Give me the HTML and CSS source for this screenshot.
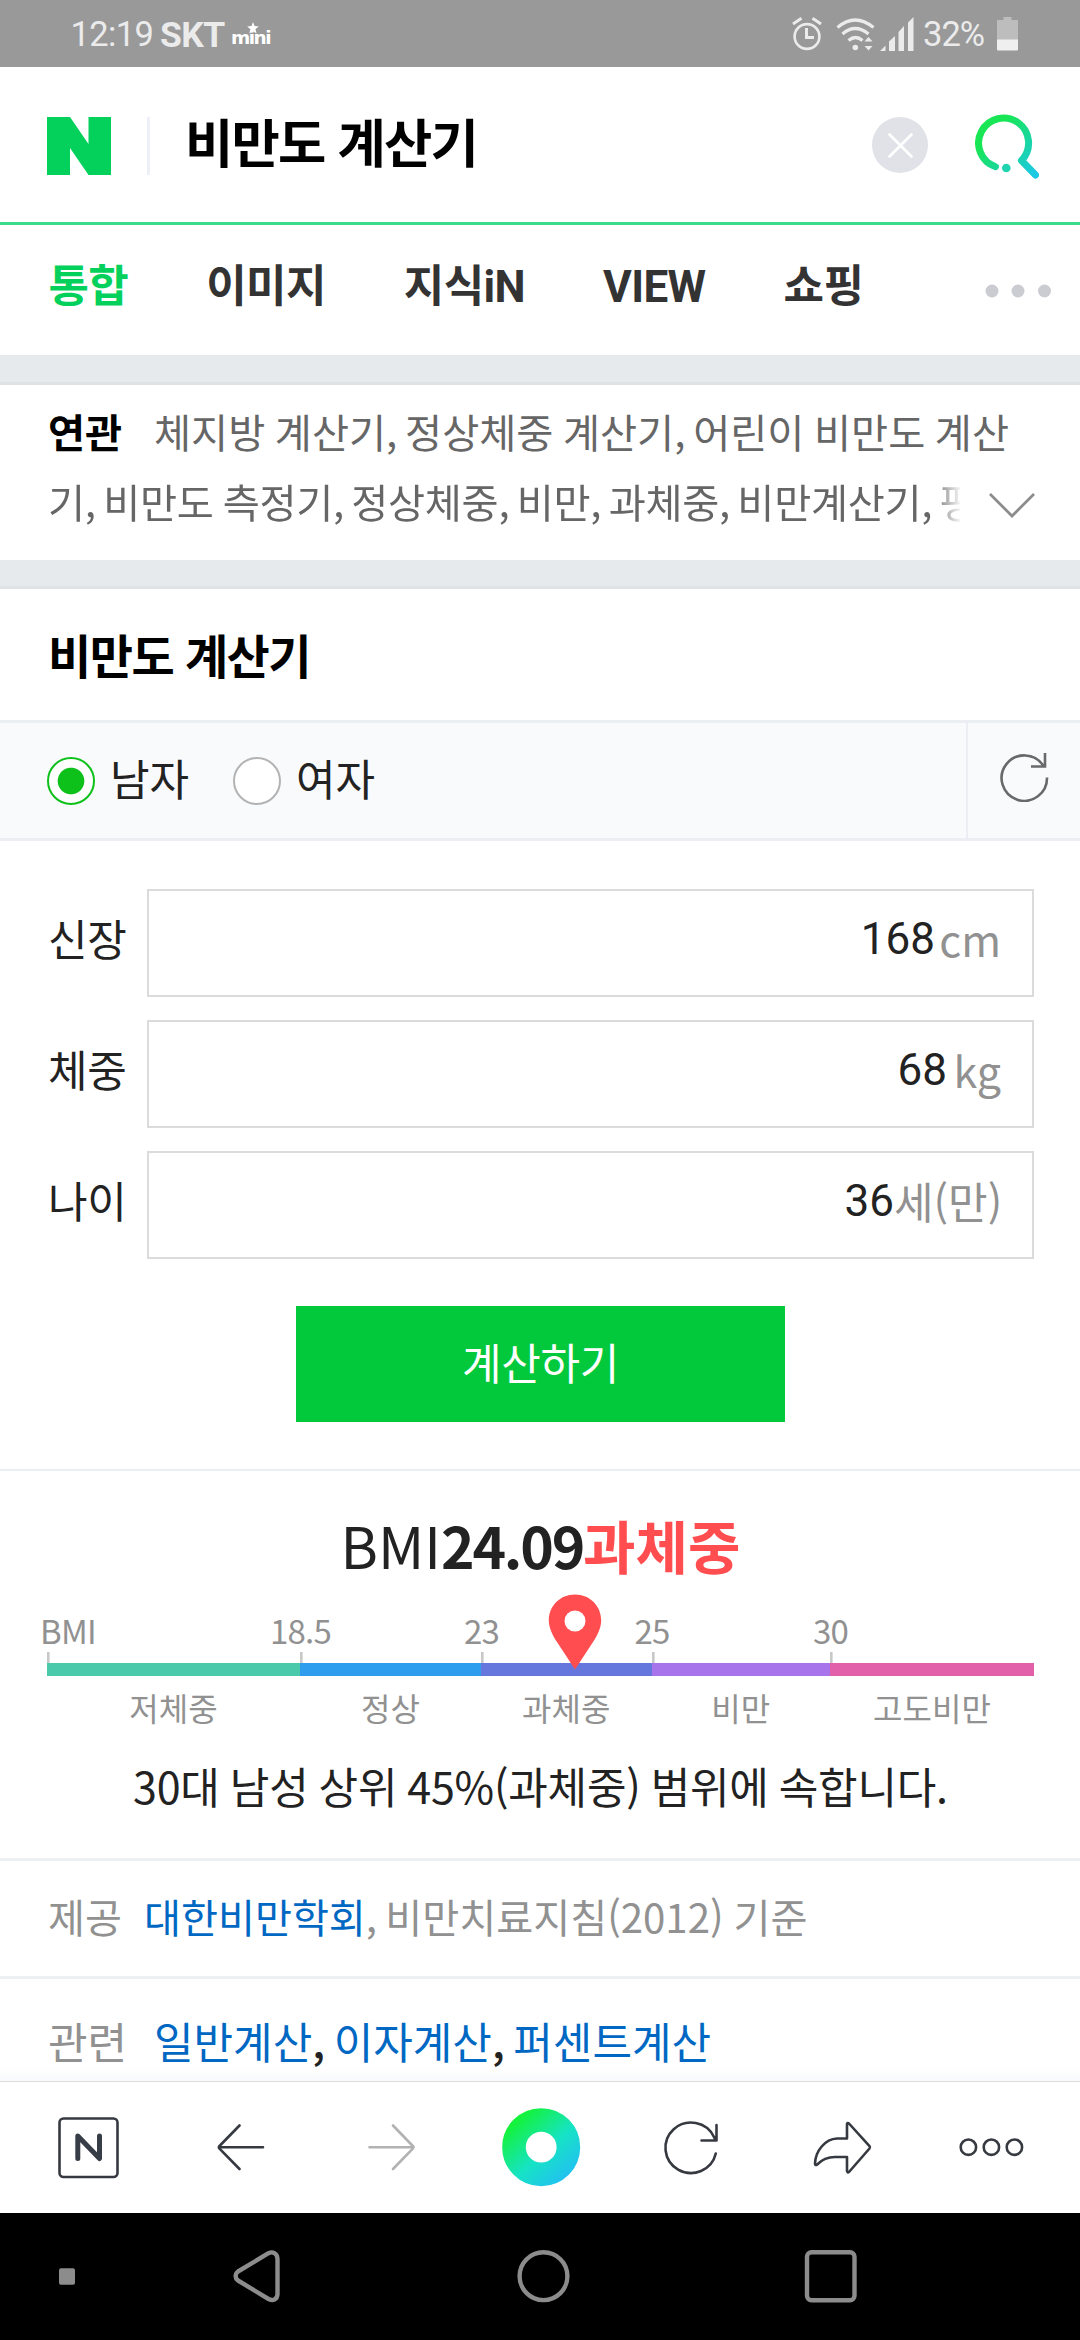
FILE: index.html
```html
<!DOCTYPE html>
<html lang="ko">
<head>
<meta charset="utf-8">
<title>비만도 계산기</title>
<link rel="stylesheet" href="styles.css">
</head>
<body>
<div class="status">
  <div class="status-left">
    <span class="clock">12:19</span>
    <b class="carrier">SKT</b>
    <span class="mini">mini<svg class="mini-star" width="12" height="12" viewBox="0 0 12 12"><path d="M6 0l1.500 4 4.300.4-3.300 2.700 1 4.400L6 9l-3.700 2.500 1.200-4.300L.2 4.400l4.400-.3z" fill="#fff"/></svg></span>
  </div>
  <div class="status-right">
    <svg class="alarm" width="30" height="34" viewBox="0 0 30 34" fill="none" stroke="#ebebeb" stroke-width="2.600"><circle cx="15" cy="19.500" r="12.400"/><path d="M14.500 11v9.500H22M1 7l8.500-5.700M29 7l-8.500-5.700" stroke-width="3"/></svg>
    <svg class="wifi" width="40" height="34" viewBox="0 0 40 34" fill="none" stroke="#ebebeb" stroke-width="3.200"><path d="M1.500 10.500q17.500-15 36 0M6.500 17q12.500-11 26 0M12.500 23.500q7-6 14 0"/><circle cx="19.300" cy="30.500" r="2.800" fill="#ebebeb" stroke="none"/><path d="M32.500 20l4 4.500h-8zM32.500 33.500l4-4.500h-8z" fill="#ebebeb" stroke="none"/></svg>
    <svg class="signal" width="34" height="34" viewBox="0 0 34 34" fill="#ebebeb"><path d="M0 34l5.500-5.500V34zM9 34V24.500l6-5.500v15zM18.500 34V15l5.500-6v25zM28 34V5.500L33.500 0v34z"/></svg>
    <span class="pct">32%</span>
    <svg class="battery" width="21" height="34" viewBox="0 0 21 34"><path d="M6.500 0h8v3H21v20H0V3h6.500z" fill="#bdbdbd"/><path d="M0 22.500h21V32.500q0 1-1 1H1q-1 0-1-1z" fill="#efefef"/></svg>
  </div>
</div>

<header class="search">
  <svg class="logo" width="64" height="58" viewBox="0 0 64 58"><path d="M0 0h23l18.500 27V0H64v58H41.500L23 31v27H0z" fill="#03d15c"/></svg>
  <i class="search-line"></i>
  <div class="query">비만도 계산기</div>
  <svg class="clear" width="56" height="56" viewBox="0 0 56 56"><circle cx="28" cy="28" r="28" fill="#e1e2e7"/><path d="M17.500 17.500l22 22M39.500 17.500l-22 22" stroke="#fff" stroke-width="2.600" stroke-linecap="round"/></svg>
  <svg class="glass" width="64" height="66" viewBox="0 0 64 66" fill="none" stroke="url(#gs)" stroke-width="7"><defs><linearGradient id="gs" gradientUnits="userSpaceOnUse" x1="12" y1="14" x2="62" y2="62"><stop offset="0.100" stop-color="#18e654"/><stop offset="0.950" stop-color="#1bc8e4"/></linearGradient></defs><path d="M20.500 52.700A25 25 0 1 1 46.500 46.500L60.500 61" stroke-linecap="round" stroke-linejoin="round"/><circle cx="31.300" cy="54" r="4.300" fill="#20d4b2" stroke="none"/></svg>
</header>

<nav class="tabs">
  <span class="tab on">통합</span><span class="tab">이미지</span><span class="tab">지식iN</span><span class="tab">VIEW</span><span class="tab">쇼핑</span>
  <svg class="more" width="66" height="14" viewBox="0 0 66 14" fill="#cbccd1"><circle cx="7" cy="7" r="6.500"/><circle cx="33" cy="7" r="6.500"/><circle cx="59.500" cy="7" r="6.500"/></svg>
</nav>

<section class="related">
  <div class="rel-row"><b class="rel-title">연관</b><span>체지방 계산기<s>,</s> 정상체중 계산기<s>,</s> 어린이 비만도 계산</span></div>
  <div class="rel-row rel-second"><span class="rel-fade">기<s>,</s> 비만도 측정기<s>,</s> 정상체중<s>,</s> 비만<s>,</s> 과체중<s>,</s> 비만계산기<s>,</s> 평</span>
    <svg class="chev" width="46" height="26" viewBox="0 0 46 26" fill="none" stroke="#8c8c8c" stroke-width="2.800"><path d="M1 1l22 22L45 1"/></svg></div>
</section>

<main class="calc">
  <h2 class="calc-title">비만도 계산기</h2>
  <div class="sex">
    <i class="radio checked"></i><span class="sex-label">남자</span>
    <i class="radio"></i><span class="sex-label">여자</span>
    <div class="reset"><svg width="50" height="50" viewBox="0 0 50 50" fill="none" stroke="#696969" stroke-width="2.600"><path d="M47 25.500A22.700 22.700 0 1 1 43.500 14"/><path d="M45 1v13.500H31"/></svg></div>
  </div>
  <div class="form">
    <div class="field"><span class="field-name">신장</span><div class="box"><span class="num">168</span><span class="unit u1">cm</span></div></div>
    <div class="field"><span class="field-name">체중</span><div class="box"><span class="num">68</span><span class="unit u2">kg</span></div></div>
    <div class="field"><span class="field-name">나이</span><div class="box"><span class="num">36</span><span class="unit u3">세(만)</span></div></div>
    <div class="submit">계산하기</div>
  </div>
  <div class="result">
    <div class="bmi">BMI<b class="bmi-value">24.09</b><b class="bmi-state">과체중</b></div>
    <div class="scale">
      <span class="mark first" style="left:0">BMI</span>
      <span class="mark" style="left:253px">18.5</span>
      <span class="mark" style="left:434px">23</span>
      <span class="mark" style="left:604.500px">25</span>
      <span class="mark" style="left:783px">30</span>
      <div class="bars"><i class="s1"></i><i class="s2"></i><i class="s3"></i><i class="s4"></i><i class="s5"></i></div>
      <div class="names"><span>저체중</span><span>정상</span><span>과체중</span><span>비만</span><span>고도비만</span></div>
      <svg class="pin" width="54" height="76" viewBox="0 0 54 76"><path d="M27 .5C12 .5.8 12 .8 26.500.8 34 5 42 9 48L27 75.500 45 48c4-6 8.200-14 8.200-21.500C53.200 12 42 .5 27 .5z" fill="#ff4d50"/><circle cx="27" cy="27" r="10.500" fill="#fff"/></svg>
    </div>
    <p class="summary">30대 남성 상위 45%(과체중) 범위에 속합니다.</p>
  </div>
  <div class="source"><span class="src-name">제공</span><span><a>대한비만학회</a><s>,</s> 비만치료지침(2012) 기준</span></div>
  <div class="links"><span class="links-name">관련</span><span><a>일반계산</a><s>,</s> <a>이자계산</a><s>,</s> <a>퍼센트계산</a></span></div>
</main>

<footer class="toolbar">
  <svg width="1080" height="131" viewBox="0 0 1080 131" fill="none" stroke="#363a40" stroke-width="2.600" stroke-linecap="round" stroke-linejoin="round">
    <defs><linearGradient id="gd" gradientUnits="userSpaceOnUse" x1="512" y1="38" x2="564" y2="96"><stop offset="0.050" stop-color="#14f23c"/><stop offset="0.580" stop-color="#16e3c4"/><stop offset="1" stop-color="#21c3ee"/></linearGradient></defs>
    <rect x="59.500" y="36.500" width="58" height="58.500" rx="4"/>
    <path d="M77.800 76.500V54L99.500 76.500V54" stroke="#363d46" stroke-width="5"/>
    <path d="M263 65.300H220M239.500 43.500L219.500 64q-1.300 1.300 0 2.600L239.500 87"/>
    <path d="M369.500 65.300H412M393 43.500L412.800 64q1.300 1.300 0 2.600L393 87" stroke="#b2b2b2"/>
    <circle cx="541.200" cy="65.200" r="27.200" stroke="url(#gd)" stroke-width="23.600"/>
    <path d="M715.800 71.500A25.500 25.200 0 1 1 714 55L716 58.500M716.500 43V58.500H701.500"/>
    <path d="M847 42v14.500h-10C825 57 815.500 69 815 81.500c0 1.600 1 2 2.200 1C822 77.500 827 75 835 75h12V89q.5 2 2 1L869.500 66.500q1-1.200 0-2.400L849 41.500q-1.500-1-2 .5z"/>
    <circle cx="968.400" cy="65.200" r="7.700"/><circle cx="991.400" cy="65.200" r="7.700"/><circle cx="1014.400" cy="65.200" r="7.700"/>
  </svg>
</footer>
<div class="sysnav">
  <svg width="1080" height="127" viewBox="0 0 1080 127" fill="none" stroke="#8c8c8c" stroke-width="4.400" stroke-linejoin="round">
    <rect x="59" y="55.300" width="16" height="16.500" rx="2" fill="#8c8c8c" stroke="none"/>
    <path d="M238 58.500L268.500 40.200Q272 38.500 274.500 40.200 277.500 42 277.500 46V81Q277.500 85 274.500 86.500 272 87.800 268.500 86L238 67.500Q235.500 65.500 235.700 63 235.800 60 238 58.500z"/>
    <circle cx="543.500" cy="63.200" r="23.900"/>
    <rect x="807" y="39.200" width="47.500" height="48" rx="4.500"/>
  </svg>
</div>
</body>
</html>
```
FILE: styles.css
```css
* { box-sizing: border-box; }
body {
  margin: 0;
  width: 1080px;
  height: 2340px;
  overflow: hidden;
  display: flex;
  flex-direction: column;
  background: #fff;
  color: #222;
  font-family: "Noto Sans CJK KR", sans-serif;
  white-space: nowrap;
}
svg { display: block; flex: none; }
i { font-style: normal; flex: none; }
/* list separators sit tight against the next word */
s { text-decoration: none; margin-right: -1.800px; }

/* system status bar */
.status {
  height: 67px;
  flex: none;
  background: #999;
  color: #ebebeb;
  font-family: Roboto, sans-serif;
  font-size: 34.500px;
  line-height: 67px;
  display: flex;
  justify-content: space-between;
  padding: 0 62px 0 70.500px;
}
.status-left, .status-right { display: flex; }
.clock { width: 89.500px; letter-spacing: -0.600px; padding-top: 1px; }
.carrier { width: 71px; font-size: 35.500px; letter-spacing: -0.600px; padding-top: 1.500px; }
.mini {
  position: relative;
  font-family: "DejaVu Sans", sans-serif;
  font-weight: bold;
  font-size: 18.500px;
  letter-spacing: -1.500px;
  color: #fff;
  padding-top: 4px;
}
.mini-star { position: absolute; left: 16px; top: 22px; }
.status-right svg { margin-top: 17px; }
.wifi { margin-left: 14px; }
.signal { margin-left: 4px; }
.pct { width: 74px; margin-left: 9px; letter-spacing: -1px; padding-top: 1px; }

/* search header */
.search {
  height: 158px;
  flex: none;
  border-bottom: 3px solid #3bdc88;
  display: flex;
  padding: 50px 40px 0 47px;
}
.search-line { width: 3px; height: 58px; margin-left: 36px; background: #eef0f7; }
.query {
  margin-left: 35px;
  flex: 1;
  margin-top: -14px;
  font-size: 52.500px;
  line-height: 74px;
  font-weight: 700;
  letter-spacing: -1.800px;
  color: #000;
}
.clear { margin: 0 46.500px 0 0; }
.glass { margin: -3px 1.500px 0 0; }

/* search tabs */
.tabs {
  height: 130px;
  flex: none;
  display: flex;
  gap: 78px;
  padding: 31px 29px 0 48.400px;
  font-family: Roboto, "Noto Sans CJK KR", sans-serif;
  font-weight: 700;
  font-size: 44px;
  line-height: 62px;
  letter-spacing: -0.600px;
  color: #333;
}
.on { color: #03d15c; }
.more { margin: 28px 0 0 auto; }

/* related keywords */
.related {
  height: 205px;
  flex: none;
  border-top: 27px solid #e6eaed;
  box-shadow: inset 0 3px #dfe3e6;
  font-size: 40.300px;
  line-height: 69.500px;
  color: #666;
  padding: 14px 45px 0 48px;
  word-spacing: -1.700px;
}
.rel-row { display: flex; }
.rel-title { width: 106px; color: #000; }
.rel-second { justify-content: space-between; }
.rel-fade {
  width: 912px;
  letter-spacing: -0.320px;
  -webkit-mask-image: linear-gradient(to right, #000 884px, transparent 914px);
  mask-image: linear-gradient(to right, #000 884px, transparent 914px);
}
.chev { margin-top: 27.500px; }

/* calculator */
.calc {
  border-top: 26px solid #e6eaed;
  box-shadow: inset 0 3px #dfe3e6;
  height: 1521px;
  flex: none;
  overflow: hidden;
}
.calc-title {
  margin: 0;
  height: 134px;
  padding: 34px 0 0 48px;
  font-size: 47px;
  line-height: 68px;
  letter-spacing: -1.500px;
  color: #000;
}
.sex {
  height: 121px;
  border: solid #ebeef2;
  border-width: 3px 0;
  background: #f9fafc;
  display: flex;
  align-items: center;
  padding-left: 47px;
  font-size: 43px;
  line-height: 60px;
}
.radio {
  width: 48px;
  height: 48px;
  border-radius: 50%;
  border: 2.500px solid #b3b3b3;
  background: #fff;
}
.checked { border-color: #0dc11a; background: radial-gradient(circle, #0dc11a 12.800px, #fff 13.800px); }
.sex-label { width: 123px; margin-left: 15px; margin-top: -7px; }
.reset {
  margin-left: auto;
  width: 114px;
  height: 115px;
  border-left: 2px solid #ebeef2;
  padding: 29px 0 0 32px;
}
.form { height: 628px; padding: 47.500px 46px 0 47px; }
.field { display: flex; height: 108px; margin-bottom: 23.200px; font-size: 43px; line-height: 97px; }
.field-name { width: 100px; padding-left: 1px; letter-spacing: -0.300px; }
.box {
  flex: 1;
  border: 2.800px solid #dadbdb;
  display: flex;
  justify-content: flex-end;
  padding-right: 31px;
}
.num { font-family: Roboto, sans-serif; font-size: 44px; line-height: 96px; }
.unit { color: #919191; text-align: right; line-height: 94px; }
.u1 { width: 66px; }
.u2 { width: 54px; }
.u3 { width: 107px; }
.submit {
  width: 489px;
  height: 116px;
  margin: 47px 0 0 249px;
  background: #02c93c;
  color: #fff;
  font-size: 43px;
  line-height: 110px;
  letter-spacing: -0.300px;
  text-align: center;
}
.result { height: 389px; border-top: 2px solid #ebeef2; padding: 32px 46px 0 47px; }
.bmi { font-size: 57px; line-height: 82px; height: 124px; text-align: center; }
.bmi-value { letter-spacing: -2.200px; }
.bmi-state { color: #ff4d50; }
.scale { position: relative; height: 111px; padding-top: 36px; color: #919191; }
.mark {
  position: absolute;
  top: -16px;
  height: 52px;
  width: 100px;
  margin-left: -48.500px;
  padding-right: 2px;
  text-align: center;
  font-size: 33px;
  line-height: 38px;
  letter-spacing: -0.800px;
  background: linear-gradient(#c8c8c8, #c8c8c8) 50% 41px / 2.600px 11px no-repeat;
}
.first { text-align: left; text-indent: 41.500px; }
.bars, .names { display: grid; grid-template-columns: 253px 181px 170.500px 178.500px 1fr; }
.bars { height: 13px; }
.s1 { background: #4ac9ab; }
.s2 { background: #2f9dee; }
.s3 { background: #6576dc; }
.s4 { background: #a874ec; }
.s5 { background: #e260a9; }
.names { font-size: 32px; line-height: 46px; padding-top: 7.500px; text-align: center; }
.pin { position: absolute; left: 501px; top: -33px; }
.summary {
  margin: 16px 0 0;
  font-size: 43px;
  line-height: 62px;
  text-align: center;
  word-spacing: -1.700px;
  letter-spacing: -0.230px;
}
.source {
  height: 118px;
  border-top: 3px solid #edf0f3;
  padding-left: 48px;
  font-size: 40.200px;
  line-height: 109px;
  color: #919191;
  display: flex;
  word-spacing: -1.200px;
}
.src-name { width: 96px; }
.links {
  border-top: 3px solid #edf0f3;
  padding-left: 48px;
  font-size: 43px;
  line-height: 122px;
  height: 107px;
  display: flex;
  background: linear-gradient(#fff 88px, #f6f7f9 107px);
  word-spacing: -1.700px;
}
.links s { font-weight: 500; }
.links-name { width: 106px; color: #919191; }
a { color: #0068c3; }

/* browser toolbar and system navigation */
.toolbar { height: 132px; flex: none; background: #fff; border-top: 1px solid #dcdee0; }
.sysnav { height: 127px; flex: none; background: #000; }
```
